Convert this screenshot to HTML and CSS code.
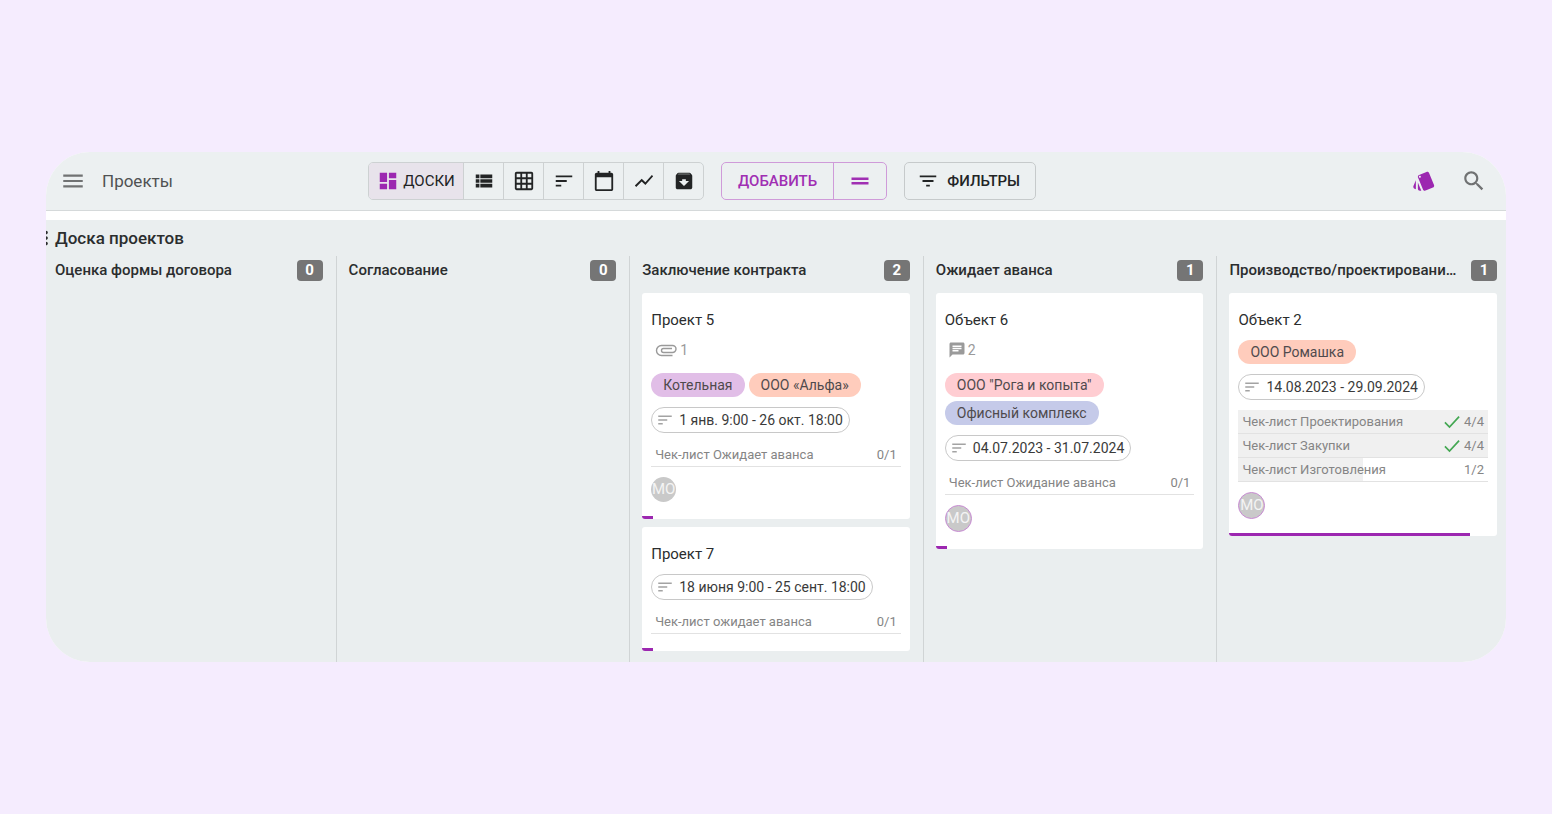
FILE: index.html
```
<!DOCTYPE html>
<html lang="ru">
<head>
<meta charset="utf-8">
<title>Проекты</title>
<link rel="stylesheet" href="styles.css">
</head>
<body>
<svg class="sprite" aria-hidden="true">
  <symbol id="i-menu" viewBox="0 0 24 24"><path d="M3 18h18v-2H3v2zm0-5h18v-2H3v2zm0-7v2h18V6H3z"/></symbol>
  <symbol id="i-dash" viewBox="0 0 24 24"><path d="M3 13h8V3H3v10zm0 8h8v-6H3v6zm10 0h8V11h-8v10zm0-18v6h8V3h-8z"/></symbol>
  <symbol id="i-list" viewBox="0 0 24 24"><path d="M3 14h4v-4H3v4zm0 5h4v-4H3v4zM3 9h4V5H3v4zm5 5h13v-4H8v4zm0 5h13v-4H8v4zM8 5v4h13V5H8z"/></symbol>
  <symbol id="i-grid" viewBox="0 0 24 24"><path d="M20 2H4c-1.1 0-2 .9-2 2v16c0 1.1.9 2 2 2h16c1.1 0 2-.9 2-2V4c0-1.1-.9-2-2-2zM8 20H4v-4h4v4zm0-6H4v-4h4v4zm0-6H4V4h4v4zm6 12h-4v-4h4v4zm0-6h-4v-4h4v4zm0-6h-4V4h4v4zm6 12h-4v-4h4v4zm0-6h-4v-4h4v4zm0-6h-4V4h4v4z"/></symbol>
  <symbol id="i-sort" viewBox="0 0 24 24"><path d="M3 18h6v-2H3v2zM3 6v2h18V6H3zm0 7h12v-2H3v2z"/></symbol>
  <symbol id="i-cal" viewBox="0 0 24 24"><path d="M20 3h-1V1h-2v2H7V1H5v2H4c-1.1 0-2 .9-2 2v16c0 1.1.9 2 2 2h16c1.1 0 2-.9 2-2V5c0-1.1-.9-2-2-2zm0 18H4V8h16v13z"/></symbol>
  <symbol id="i-chart" viewBox="0 0 24 24"><path d="M3.5 18.49l6-6.01 4 4L22 6.92l-1.41-1.41-7.09 7.97-4-4L2 16.99z"/></symbol>
  <symbol id="i-archive" viewBox="0 0 24 24"><path d="M5 4h14v2H5z" opacity=".5"/><path d="M20.54 5.23l-1.39-1.68C18.88 3.21 18.47 3 18 3H6c-.47 0-.88.21-1.16.55L3.46 5.23C3.17 5.57 3 6.02 3 6.5V19c0 1.1.9 2 2 2h14c1.1 0 2-.9 2-2V6.5c0-.48-.17-.93-.46-1.27zM12 17.5L6.5 12H10v-2h4v2h3.5L12 17.5zM5.12 5l.81-1h12l.94 1H5.12z"/></symbol>
  <symbol id="i-handle" viewBox="0 0 24 24"><path d="M20.500 8.500h-17v2.500h17zM3.500 15.500h17V13h-17z"/></symbol>
  <symbol id="i-filter" viewBox="0 0 24 24"><path d="M10 18h4v-2h-4v2zM3 6v2h18V6H3zm3 7h12v-2H6v2z"/></symbol>
  <symbol id="i-style" viewBox="0 0 24 24"><path d="M2.53 19.65l1.34.56v-9.03l-2.43 5.86c-.41 1.02.08 2.19 1.09 2.61zm19.5-3.7L17.07 3.98c-.31-.75-1.04-1.21-1.81-1.23-.26 0-.53.04-.79.15L7.1 5.95c-.75.31-1.21 1.03-1.23 1.8-.01.27.04.54.15.8l4.96 11.97c.31.76 1.05 1.22 1.83 1.23.26 0 .52-.05.77-.15l7.36-3.05c1.02-.42 1.51-1.59 1.09-2.6zM7.88 8.75c-.55 0-1-.45-1-1s.45-1 1-1 1 .45 1 1-.45 1-1 1zm-2 11c0 1.1.9 2 2 2h1.45l-3.45-8.34v6.34z"/></symbol>
  <symbol id="i-search" viewBox="0 0 24 24"><path d="M15.5 14h-.79l-.28-.27C15.41 12.59 16 11.110 16 9.500 16 5.910 13.090 3 9.500 3S3 5.910 3 9.500 5.910 16 9.500 16c1.610 0 3.090-.59 4.230-1.570l.27.28v.79l5 4.990L20.490 19l-4.990-5zm-6 0C7.010 14 5 11.990 5 9.500S7.010 5 9.500 5 14 7.010 14 9.500 11.990 14 9.500 14z"/></symbol>
  <symbol id="i-more" viewBox="3 0 18 24"><path d="M12 8c1.1 0 2-.9 2-2s-.9-2-2-2-2 .9-2 2 .9 2 2 2zm0 2c-1.1 0-2 .9-2 2s.9 2 2 2 2-.9 2-2-.9-2-2-2zm0 6c-1.1 0-2 .9-2 2s.9 2 2 2 2-.9 2-2-.9-2-2-2z"/></symbol>
  <symbol id="i-clip" viewBox="0 0 24 24"><path fill="none" stroke="currentColor" stroke-width="1.400" d="M18.500 17.500H7.500a5 5 0 0 1 0-10h11a3.500 3.500 0 0 1 0 7h-9a2 2 0 0 1 0-4H18"/></symbol>
  <symbol id="i-chat" viewBox="0 0 24 24"><path d="M20 2H4c-1.100 0-1.990.9-1.990 2L2 22l4-4h14c1.100 0 2-.9 2-2V4c0-1.100-.9-2-2-2zM6 9h12v2H6V9zm8 5H6v-2h8v2zm4-6H6V6h12v2z"/></symbol>
  <symbol id="i-check" viewBox="0 0 24 24"><path fill="none" stroke="currentColor" stroke-width="2" d="M3.500 12.500L9 18 20.500 5.500"/></symbol>
</svg>

<main class="panel">
  <header class="topbar">
    <div class="brand">
      <button class="icon-btn" aria-label="Меню"><svg class="icon lg"><use href="#i-menu"/></svg></button>
      <h1 class="page-title">Проекты</h1>
    </div>
    <div class="group views">
      <button class="btn active"><svg class="icon accent"><use href="#i-dash"/></svg>Доски</button>
      <button class="btn square" aria-label="Список"><svg class="icon"><use href="#i-list"/></svg></button>
      <button class="btn square" aria-label="Таблица"><svg class="icon"><use href="#i-grid"/></svg></button>
      <button class="btn square" aria-label="Гант"><svg class="icon"><use href="#i-sort"/></svg></button>
      <button class="btn square" aria-label="Календарь"><svg class="icon"><use href="#i-cal"/></svg></button>
      <button class="btn square" aria-label="График"><svg class="icon"><use href="#i-chart"/></svg></button>
      <button class="btn square" aria-label="Архив"><svg class="icon"><use href="#i-archive"/></svg></button>
    </div>
    <div class="group add">
      <button class="btn">Добавить</button>
      <button class="btn" aria-label="Ещё"><svg class="icon md"><use href="#i-handle"/></svg></button>
    </div>
    <div class="group filters">
      <button class="btn"><svg class="icon"><use href="#i-filter"/></svg>Фильтры</button>
    </div>
    <div class="tools">
      <button class="icon-btn accent" aria-label="Метки"><svg class="icon md"><use href="#i-style"/></svg></button>
      <button class="icon-btn" aria-label="Поиск"><svg class="icon lg"><use href="#i-search"/></svg></button>
    </div>
  </header>

  <section class="board">
    <div class="board-head">
      <svg class="icon drag"><use href="#i-more"/></svg>
      <h2 class="board-title">Доска проектов</h2>
    </div>
    <div class="columns">
      <section class="column">
        <div class="column-head"><h3 class="column-title">Оценка формы договора</h3><span class="count">0</span></div>
      </section>
      <section class="column">
        <div class="column-head"><h3 class="column-title">Согласование</h3><span class="count">0</span></div>
      </section>
      <section class="column">
        <div class="column-head"><h3 class="column-title">Заключение контракта</h3><span class="count">2</span></div>
        <article class="card">
          <h4 class="card-title">Проект 5</h4>
          <div class="meta"><svg class="icon md"><use href="#i-clip"/></svg>1</div>
          <div class="chips"><span class="chip purple">Котельная</span><span class="chip orange">ООО «Альфа»</span></div>
          <div class="dates"><svg class="icon sm"><use href="#i-sort"/></svg>1 янв. 9:00 - 26 окт. 18:00</div>
          <ul class="checks"><li class="check"><span>Чек-лист Ожидает аванса</span><span class="ratio">0/1</span></li></ul>
          <span class="avatar">МО</span>
          <span class="progress" style="width:4%"></span>
        </article>
        <article class="card">
          <h4 class="card-title">Проект 7</h4>
          <div class="dates"><svg class="icon sm"><use href="#i-sort"/></svg>18 июня 9:00 - 25 сент. 18:00</div>
          <ul class="checks"><li class="check"><span>Чек-лист ожидает аванса</span><span class="ratio">0/1</span></li></ul>
          <span class="progress" style="width:4%"></span>
        </article>
      </section>
      <section class="column">
        <div class="column-head"><h3 class="column-title">Ожидает аванса</h3><span class="count">1</span></div>
        <article class="card">
          <h4 class="card-title">Объект 6</h4>
          <div class="meta"><svg class="icon sm"><use href="#i-chat"/></svg>2</div>
          <div class="chips"><span class="chip pink">ООО "Рога и копыта"</span><span class="chip blue">Офисный комплекс</span></div>
          <div class="dates"><svg class="icon sm"><use href="#i-sort"/></svg>04.07.2023 - 31.07.2024</div>
          <ul class="checks"><li class="check"><span>Чек-лист Ожидание аванса</span><span class="ratio">0/1</span></li></ul>
          <span class="avatar ringed">МО</span>
          <span class="progress" style="width:4%"></span>
        </article>
      </section>
      <section class="column">
        <div class="column-head"><h3 class="column-title">Производство/проектировани…</h3><span class="count">1</span></div>
        <article class="card">
          <h4 class="card-title">Объект 2</h4>
          <div class="chips"><span class="chip orange">ООО Ромашка</span></div>
          <div class="dates"><svg class="icon sm"><use href="#i-sort"/></svg>14.08.2023 - 29.09.2024</div>
          <ul class="checks">
            <li class="check done"><span>Чек-лист Проектирования</span><span class="ratio"><svg class="icon ok"><use href="#i-check"/></svg>4/4</span></li>
            <li class="check done"><span>Чек-лист Закупки</span><span class="ratio"><svg class="icon ok"><use href="#i-check"/></svg>4/4</span></li>
            <li class="check half"><span>Чек-лист Изготовления</span><span class="ratio">1/2</span></li>
          </ul>
          <span class="avatar ringed">МО</span>
          <span class="progress" style="width:90%"></span>
        </article>
      </section>
    </div>
  </section>
</main>
</body>
</html>
```
FILE: styles.css
```
* { box-sizing: border-box; }

body {
  margin: 0;
  min-height: 100vh;
  padding: 152px 46px;
  background: #f5ecfe;
  color: #2b2d2e;
  font-family: Roboto, "Noto Sans", sans-serif;
  font-size: 14px;
}

h1, h2, h3, h4, ul { margin: 0; padding: 0; }
ul { list-style: none; }
button { font: inherit; color: inherit; background: none; border: 0; padding: 0; }

.sprite { display: none; }
.icon { width: 22px; height: 22px; fill: currentColor; flex: none; display: block; }
.icon.sm { width: 18px; height: 18px; }
.icon.md { width: 24px; height: 24px; }
.icon.lg { width: 26px; height: 26px; }
.accent { color: #9c27b0; }

.panel { border-radius: 44px; overflow: hidden; background: #fff; }

.topbar {
  display: flex;
  align-items: center;
  height: 59px;
  padding: 0 19px 0 14px;
  background: #ecf0f1;
  border-bottom: 1px solid #d5d9da;
}
.brand { display: flex; align-items: center; gap: 16px; width: 308px; }
.icon-btn { color: #707273; }
.icon-btn.accent { color: #9c27b0; }
.page-title { font-size: 17px; font-weight: 400; color: #505253; }

.group {
  display: flex;
  height: 38px;
  margin-right: 17px;
  border: 1px solid #cdd1d2;
  border-radius: 5px;
  overflow: hidden;
}
.btn {
  display: flex;
  align-items: center;
  justify-content: center;
  font-size: 15px;
  font-weight: 500;
  text-transform: uppercase;
  color: #222425;
}
.btn + .btn { border-left: 1px solid #cdd1d2; }
.btn.active { gap: 4px; width: 94px; background: #e8e3eb; font-weight: 400; }
.btn.square { width: 40px; }
.add { border-color: #cf9bd9; }
.add .btn { color: #a02fb3; padding: 0 14px; border-color: #cf9bd9; }
.add .btn:first-child { padding: 0 16px; }
.filters { border-color: #c6cacb; }
.filters .btn { gap: 8px; padding: 0 15px 0 12px; }
.tools { display: flex; align-items: center; gap: 25px; margin-left: auto; }

.board { margin-top: 9px; background: #eaeeef; }
.board-head { display: flex; align-items: center; height: 35px; margin: 0 0 1px -9px; }
.board-title { font-size: 17px; font-weight: 500; }
.icon.drag { width: 18px; }

.columns { display: grid; grid-template-columns: repeat(5, minmax(0, 1fr)); margin: 0 -5px 0 -3px; }
.column { padding: 0 13px 11px 12px; border-right: 1px solid #d0d4d5; }
.column-head { display: flex; align-items: center; justify-content: space-between; gap: 8px; height: 28px; margin-bottom: 9px; }
.column-title {
  font-size: 15px;
  font-weight: 500;
  white-space: nowrap;
}
.count {
  flex: none;
  width: 26px;
  border-radius: 4px;
  background: #757575;
  color: #fff;
  font-size: 15px;
  font-weight: 700;
  line-height: 21px;
  text-align: center;
}

.card {
  position: relative;
  display: flex;
  flex-direction: column;
  align-items: flex-start;
  gap: 10px;
  padding: 17px 9px;
  border-radius: 3px;
  background: #fff;
  overflow: hidden;
}
.card + .card { margin-top: 8px; }
.card-title { font-size: 15px; font-weight: 400; line-height: 20px; }
.meta { display: flex; align-items: center; gap: 2px; height: 20px; margin: 0 0 3px 3px; color: #9a9a9a; }
.chips { display: flex; flex-wrap: wrap; gap: 4px; }
.chip { padding: 0 12px; border-radius: 12px; line-height: 24px; color: #4f4a4d; }
.purple { background: #e1bee7; }
.orange { background: #ffccbc; }
.pink { background: #ffcdd2; }
.blue { background: #c5cae9; }
.dates {
  display: flex;
  align-items: center;
  gap: 5px;
  height: 26px;
  padding: 0 6px 0 4px;
  border: 1px solid #c8c8c8;
  border-radius: 13px;
  color: #3a3a3a;
}
.dates .icon { color: #a3a3a3; }
.checks { width: 100%; }
.check {
  display: flex;
  align-items: center;
  justify-content: space-between;
  height: 24px;
  padding: 0 4px;
  border-bottom: 1px solid #e2e2e2;
  color: #858585;
  font-size: 13px;
}
.check.done { background: #f0f0f0; }
.check.half { background: linear-gradient(90deg, #f0f0f0 50%, #fff 50%); }
.ratio { display: flex; align-items: center; gap: 2px; }
.icon.ok { width: 20px; height: 20px; color: #43a752; }
.avatar {
  width: 25px;
  border-radius: 50%;
  background: #c9c9c9;
  color: #f4f4f4;
  font-size: 15px;
  line-height: 25px;
  text-align: center;
}
.avatar.ringed { width: 27px; border: 1px solid #c88bd3; }
.progress { position: absolute; left: 0; bottom: 0; height: 3px; background: #9c27b0; }
```
